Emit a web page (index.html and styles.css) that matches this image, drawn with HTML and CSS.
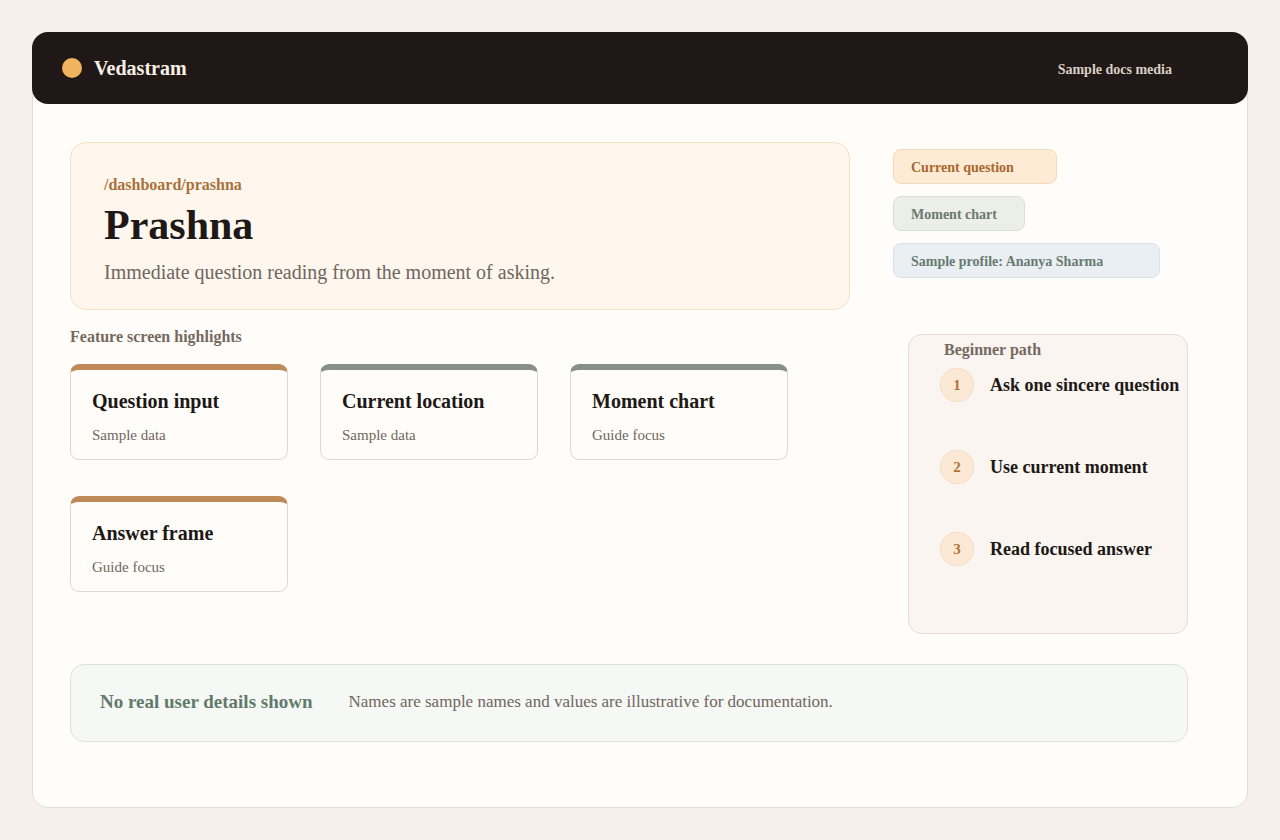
FILE: index.html
```html
<!DOCTYPE html>
<html lang="en">
<head>
<meta charset="utf-8">
<title>Vedastram – Prashna</title>
<link rel="stylesheet" href="styles.css">
</head>
<body>
<div class="frame">
  <header class="topbar">
    <div class="brand"><span class="brand-dot"></span><span class="brand-name">Vedastram</span></div>
    <nav class="topnav">Sample docs media</nav>
  </header>
  <main class="content">
    <section class="row-top">
      <div class="hero">
        <div class="crumb">/dashboard/prashna</div>
        <h1 class="hero-title">Prashna</h1>
        <p class="hero-sub">Immediate question reading from the moment of asking.</p>
      </div>
      <div class="chips">
        <span class="chip chip-amber">Current question</span>
        <span class="chip chip-sage">Moment chart</span>
        <span class="chip chip-blue">Sample profile: Ananya Sharma</span>
      </div>
    </section>
    <section class="row-mid">
      <div class="features">
        <h2 class="section-label">Feature screen highlights</h2>
        <div class="cards">
          <div class="card card-amber"><div class="card-title">Question input</div><div class="card-sub">Sample data</div></div>
          <div class="card card-grey"><div class="card-title">Current location</div><div class="card-sub">Sample data</div></div>
          <div class="card card-grey"><div class="card-title">Moment chart</div><div class="card-sub">Guide focus</div></div>
          <div class="card card-amber"><div class="card-title">Answer frame</div><div class="card-sub">Guide focus</div></div>
        </div>
      </div>
      <aside class="path">
        <div class="path-label">Beginner path</div>
        <ol class="steps">
          <li class="step"><span class="step-num">1</span><span class="step-text">Ask one sincere question</span></li>
          <li class="step"><span class="step-num">2</span><span class="step-text">Use current moment</span></li>
          <li class="step"><span class="step-num">3</span><span class="step-text">Read focused answer</span></li>
        </ol>
      </aside>
    </section>
    <section class="note">
      <strong class="note-title">No real user details shown</strong>
      <span class="note-text">Names are sample names and values are illustrative for documentation.</span>
    </section>
  </main>
</div>
</body>
</html>
```

FILE: styles.css
```css
* { box-sizing: border-box; }
html, body { margin: 0; padding: 0; }
body {
  background: #f7efea;
  font-family: "Liberation Serif", "Times New Roman", serif;
  color: #201816;
  padding: 32px;
}
.frame {
  width: 1216px;
  height: 776px;
  background: #fffdf9;
  border: 1px solid #e3ddd5;
  border-radius: 16px;
}
.topbar {
  height: 72px;
  margin: -1px -1px 0 -1px;
  background: #201816;
  border-radius: 16px;
  display: flex;
  align-items: center;
  justify-content: space-between;
  padding: 0 76px 0 30px;
}
.brand { display: flex; align-items: center; gap: 12px; }
.brand-dot { width: 20px; height: 20px; border-radius: 50%; background: #f0b45f; }
.brand-name { color: #f7f0e6; font-weight: 700; font-size: 20px; }
.topnav { color: #d8cfc5; font-weight: 700; font-size: 14px; padding-top: 4px; }

.content { padding: 38px 0 0 37px; width: 1155px; }

.row-top {
  display: grid;
  grid-template-columns: 780px 1fr;
  column-gap: 43px;
}
.hero {
  height: 168px;
  background: #fff7ee;
  border: 1px solid #f6e1c6;
  border-radius: 16px;
  padding: 32px 33px 0;
}
.crumb { color: #a8713a; font-weight: 700; font-size: 16px; line-height: 20px; }
.hero-title { margin: 6px 0 0; font-size: 42px; line-height: 48px; font-weight: 700; color: #201816; }
.hero-sub { margin: 11px 0 0; font-size: 20px; line-height: 24px; color: #6f665e; }

.chips { display: flex; flex-direction: column; align-items: flex-start; gap: 12px; padding-top: 7px; }
.chip {
  height: 35px;
  display: inline-flex;
  align-items: center;
  padding: 2px 0 0 17px;
  border-radius: 8px;
  font-weight: 700;
  font-size: 14px;
  border: 1px solid;
  white-space: nowrap;
}
.chip-amber { background: #fdebd6; border-color: #f5dabd; color: #a8682e; width: 164px; }
.chip-sage { background: #eceee8; border-color: #dbdfd7; color: #6b786e; width: 132px; }
.chip-blue { background: #e9eff3; border-color: #d9e2e8; color: #687a6f; width: 267px; }

.row-mid {
  margin-top: 17px;
  display: grid;
  grid-template-columns: 780px 280px;
  column-gap: 58px;
}
.section-label { margin: 0; font-size: 16px; line-height: 20px; font-weight: 700; color: #75695f; }
.cards {
  margin-top: 17px;
  display: grid;
  grid-template-columns: repeat(3, 218px);
  column-gap: 32px;
  row-gap: 36px;
}
.card {
  height: 96px;
  background: #fffdf9;
  border: 1px solid #ddd8d0;
  border-top: 6px solid #c08a58;
  border-radius: 9px;
  padding: 19px 21px 0;
}
.card-amber { border-top-color: #c08a58; }
.card-grey { border-top-color: #868f89; }
.card-title { font-size: 20px; line-height: 24px; font-weight: 700; color: #201816; }
.card-sub { margin-top: 13px; font-size: 15px; line-height: 18px; color: #6f665e; }

.path {
  margin-top: 7px;
  height: 300px;
  background: #faf5f0;
  border: 1px solid #e6ddd3;
  border-radius: 14px;
  padding: 5px 0 0 31px;
}
.path-label { font-size: 16px; line-height: 20px; font-weight: 700; color: #75695f; padding-left: 4px; }
.steps { list-style: none; margin: 8px 0 0; padding: 0; display: flex; flex-direction: column; gap: 48px; }
.step { display: flex; align-items: center; gap: 16px; white-space: nowrap; }
.step-num {
  width: 34px; height: 34px;
  border-radius: 50%;
  background: #fbe9d6;
  border: 1px dotted #eecda9;
  display: flex; align-items: center; justify-content: center;
  color: #b0743a; font-weight: 700; font-size: 15px;
  flex: none;
}
.step-text { font-size: 18px; font-weight: 700; color: #201816; }

.note {
  margin-top: 30px;
  width: 1118px;
  height: 78px;
  background: #f6f8f5;
  border: 1px solid #dde2dc;
  border-radius: 14px;
  display: flex;
  align-items: center;
  padding: 0 29px 2px;
  gap: 36px;
}
.note-title { font-size: 19px; font-weight: 700; color: #627a6b; }
.note-text { font-size: 17px; color: #6f665e; }
```
